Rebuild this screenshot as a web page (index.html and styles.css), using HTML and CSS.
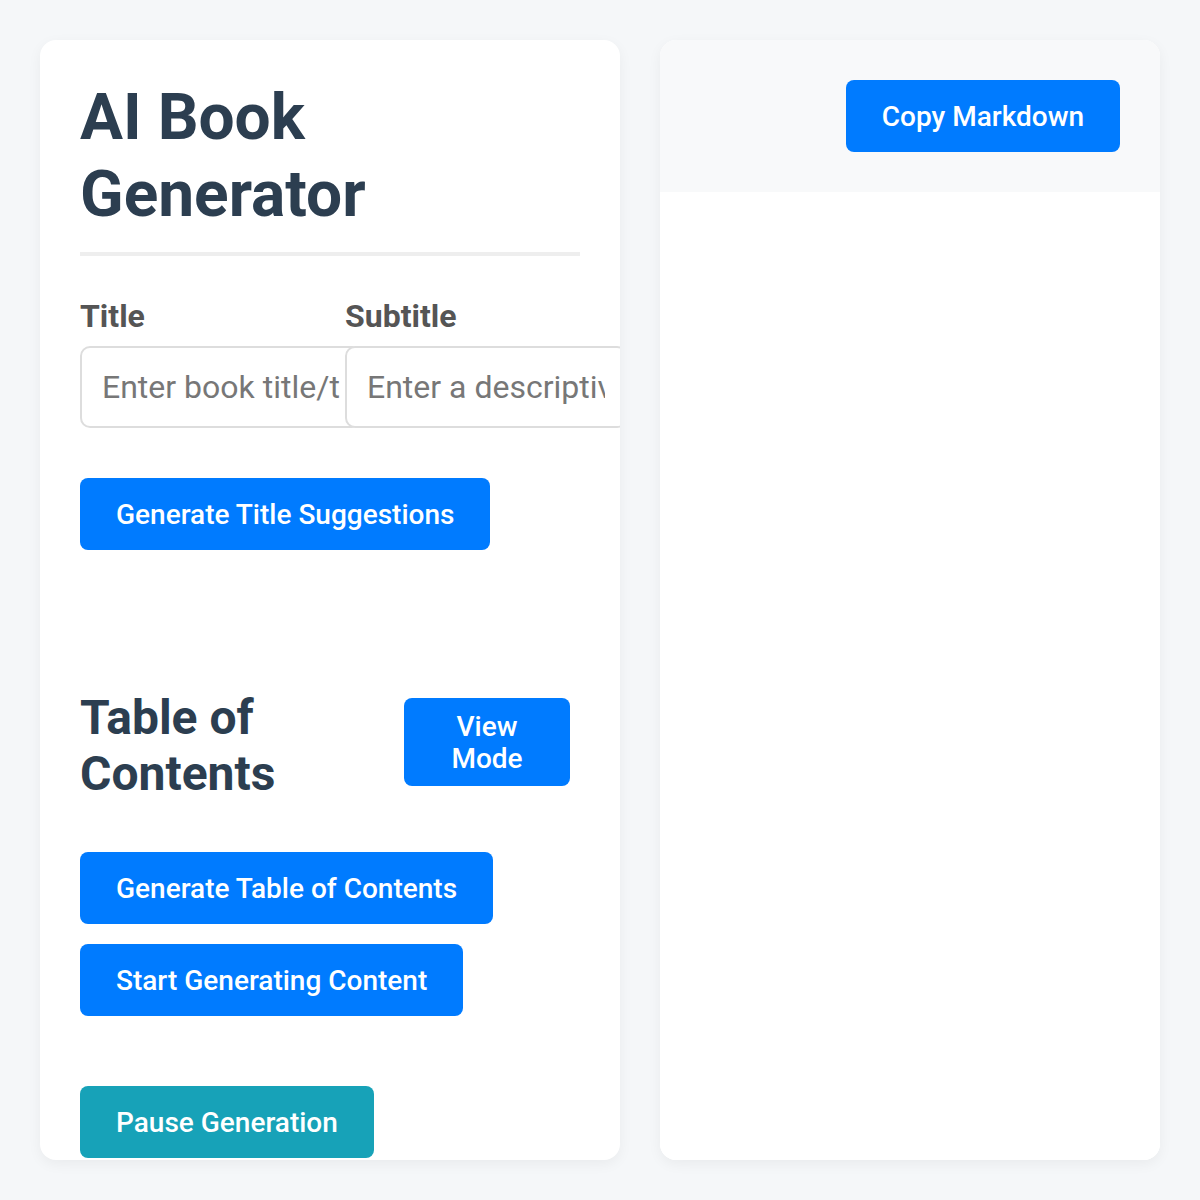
FILE: index.html
```html
<!DOCTYPE html>
<html lang="en">
<head>
<meta charset="utf-8">
<title>AI Book Generator</title>
<link rel="stylesheet" href="styles.css">
</head>
<body>
<div class="layout">
  <section class="card editor">
    <h1 class="app-title">AI Book Generator</h1>
    <div class="fields">
      <div class="field field-title">
        <label class="field-label" for="title">Title</label>
        <input class="field-input" id="title" type="text" placeholder="Enter book title/topic">
      </div>
      <div class="field field-subtitle">
        <label class="field-label" for="subtitle">Subtitle</label>
        <input class="field-input" id="subtitle" type="text" placeholder="Enter a descriptive subtitle">
      </div>
    </div>
    <button class="btn btn-primary btn-suggest">Generate Title Suggestions</button>
    <div class="toc-header">
      <h2 class="toc-title">Table of Contents</h2>
      <button class="btn btn-primary btn-view">View Mode</button>
    </div>
    <div class="actions">
      <button class="btn btn-primary">Generate Table of Contents</button>
      <button class="btn btn-primary">Start Generating Content</button>
    </div>
    <button class="btn btn-info btn-pause">Pause Generation</button>
  </section>
  <section class="card preview">
    <div class="preview-header">
      <button class="btn btn-primary">Copy Markdown</button>
    </div>
    <div class="preview-body"></div>
  </section>
</div>
</body>
</html>
```

FILE: styles.css
```css
* { box-sizing: border-box; }

html, body {
  margin: 0;
  padding: 0;
}

body {
  background: #f5f7f9;
  font-family: Roboto, "Liberation Sans", Arial, sans-serif;
  color: #2c3e50;
}

.layout {
  display: flex;
  gap: 40px;
  padding: 40px;
  height: 1200px;
}

.card {
  background: #ffffff;
  border-radius: 16px;
  box-shadow: 0 4px 14px rgba(0, 0, 0, 0.05);
  height: 1120px;
  overflow: hidden;
}

.editor {
  width: 580px;
  padding: 40px;
}

.app-title {
  margin: 0;
  font-size: 64px;
  line-height: 1.2;
  font-weight: 700;
  color: #2c3e50;
  padding-bottom: 18px;
  border-bottom: 4px solid #eeeeee;
}

.fields {
  display: flex;
  margin-top: 42px;
}

.field {
  display: flex;
  flex-direction: column;
  flex: none;
}

.field-title { width: 265px; }
.field-subtitle { width: 266px; }

.field-label {
  font-size: 32px;
  font-weight: 700;
  color: #555555;
  line-height: 37px;
  margin-bottom: 11px;
}

.field-input {
  width: 282px;
  font-family: Roboto, "Liberation Sans", Arial, sans-serif;
  font-size: 32px;
  line-height: 38px;
  padding: 20px;
  border: 2px solid #dddddd;
  border-radius: 10px;
  background: #ffffff;
  color: #333333;
  outline: none;
}

.field-input::placeholder {
  color: #777777;
}

.btn {
  display: block;
  font-family: Roboto, "Liberation Sans", Arial, sans-serif;
  font-size: 28px;
  line-height: 32px;
  font-weight: 500;
  color: #ffffff;
  border: none;
  border-radius: 8px;
  padding: 21px 36px 19px;
  cursor: pointer;
  text-align: center;
}

.btn-primary { background: #007bff; }
.btn-info { background: #17a2b8; }

.btn-suggest {
  margin-top: 50px;
}

.toc-header {
  display: flex;
  justify-content: space-between;
  align-items: flex-start;
  margin-top: 140px;
}

.toc-title {
  margin: 0;
  font-size: 48px;
  line-height: 56px;
  font-weight: 700;
  color: #2c3e50;
  width: 220px;
}

.btn-view {
  width: 166px;
  padding: 13px 24px 11px;
  margin-top: 8px;
  margin-right: 10px;
}

.actions {
  display: flex;
  flex-direction: column;
  align-items: flex-start;
  gap: 20px;
  margin-top: 50px;
}

.btn-pause {
  margin-top: 70px;
}

.preview {
  width: 500px;
  display: flex;
  flex-direction: column;
}

.preview-header {
  background: #f8f9fa;
  padding: 40px;
  display: flex;
  justify-content: flex-end;
}

.preview-body {
  flex: 1;
  background: #ffffff;
}
```
